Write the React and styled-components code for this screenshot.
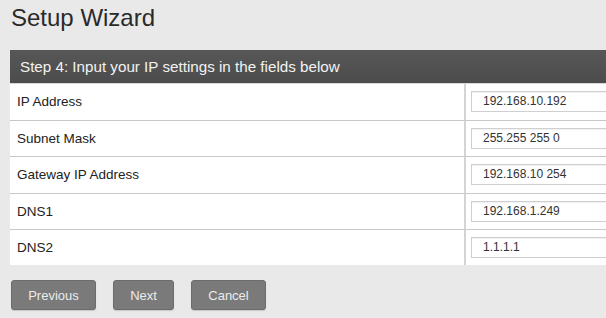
import React from "react";
import styled, { createGlobalStyle } from "styled-components";

const Global = createGlobalStyle`
  html, body { margin: 0; padding: 0; background: #e9e9e9; }
  body { font-family: "Liberation Sans", Arial, sans-serif; }
`;

const Page = styled.div`
  width: 606px;
  height: 318px;
  overflow: hidden;
  padding-left: 10px;
  box-sizing: border-box;
  background: #e9e9e9;
`;

const Title = styled.h1`
  margin: 0;
  padding: 4px 0 0 1px;
  height: 46px;
  box-sizing: border-box;
  font-size: 24px;
  font-weight: normal;
  color: #2a2a2a;
  line-height: 28px;
`;

const Panel = styled.div`
  width: 620px;
`;

const Header = styled.div`
  height: 33px;
  margin-top: 4px;
  background: linear-gradient(#575757, #4c4c4c);
  color: #f2f2f2;
  font-size: 15.2px;
  line-height: 33px;
  padding-left: 10px;
`;

const Table = styled.div`
  display: grid;
  grid-template-columns: 456px 1fr;
  background: #fff;
  border-top: 1px solid #d8d8d8;
`;

const Label = styled.div`
  display: flex;
  align-items: center;
  padding-left: 7px;
  font-size: 13.5px;
  color: #222;
  border-right: 2px solid #d4d4d4;
  border-bottom: ${p => (p.last ? "none" : "1px solid #c8c8c8")};
  box-sizing: border-box;
  height: ${p => (p.last ? "35px" : "36.5px")};
`;

const Cell = styled.div`
  display: flex;
  align-items: center;
  padding-left: 5px;
  border-bottom: ${p => (p.last ? "none" : "1px solid #c8c8c8")};
  box-sizing: border-box;
  height: ${p => (p.last ? "35px" : "36.5px")};
`;

const Input = styled.div`
  width: 200px;
  height: 21px;
  border: 1px solid #cfcfcf;
  box-shadow: inset 0 1px 1px rgba(0, 0, 0, 0.06);
  box-sizing: border-box;
  font-size: 12px;
  color: #333;
  line-height: 19px;
  padding-left: 11px;
  background: #fff;
`;

const Buttons = styled.div`
  display: flex;
  gap: 17px;
  padding-top: 15px;
  padding-left: 1px;
`;

const Button = styled.button`
  height: 30px;
  width: ${p => p.w}px;
  background: #7a7a7a;
  border: 1px solid #6c6c6c;
  border-radius: 3px;
  color: #ececec;
  font-family: "Liberation Sans", Arial, sans-serif;
  font-size: 13px;
  padding: 0;
  box-shadow: 0 1px 1px rgba(0, 0, 0, 0.15);
`;

const rows = [
  ["IP Address", "192.168.10.192"],
  ["Subnet Mask", "255.255 255 0"],
  ["Gateway IP Address", "192.168.10 254"],
  ["DNS1", "192.168.1.249"],
  ["DNS2", "1.1.1.1"],
];

export default function App() {
  return (
    <>
      <Global />
      <Page>
        <Title>Setup Wizard</Title>
        <Panel>
          <Header>Step 4: Input your IP settings in the fields below</Header>
          <Table>
            {rows.map(([l, v], i) => (
              <React.Fragment key={l}>
                <Label last={i === rows.length - 1}>{l}</Label>
                <Cell last={i === rows.length - 1}>
                  <Input>{v}</Input>
                </Cell>
              </React.Fragment>
            ))}
          </Table>
        </Panel>
        <Buttons>
          <Button w={85}>Previous</Button>
          <Button w={61}>Next</Button>
          <Button w={75}>Cancel</Button>
        </Buttons>
      </Page>
    </>
  );
}
